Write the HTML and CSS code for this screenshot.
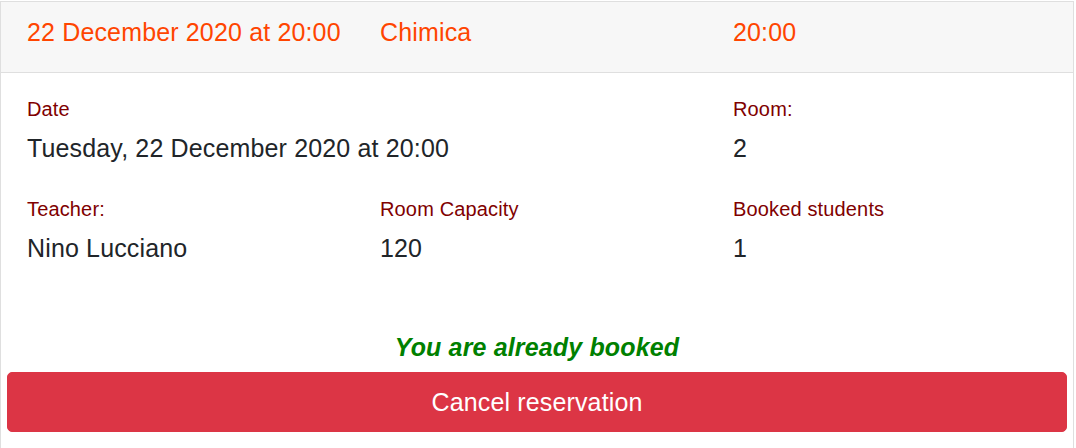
FILE: index.html
```html
<!DOCTYPE html>
<html lang="en">
<head>
<meta charset="utf-8">
<title>Lesson</title>
<link rel="stylesheet" href="styles.css">
</head>
<body>
<div class="card">
  <div class="card-header">
    <div class="grid">
      <div class="head-item">22 December 2020 at 20:00</div>
      <div class="head-item">Chimica</div>
      <div class="head-item">20:00</div>
    </div>
  </div>
  <div class="card-body">
    <div class="grid row-gap">
      <div class="field span-2">
        <div class="label">Date</div>
        <div class="value">Tuesday, 22 December 2020 at 20:00</div>
      </div>
      <div class="field">
        <div class="label">Room:</div>
        <div class="value">2</div>
      </div>
    </div>
    <div class="grid">
      <div class="field">
        <div class="label">Teacher:</div>
        <div class="value">Nino Lucciano</div>
      </div>
      <div class="field">
        <div class="label">Room Capacity</div>
        <div class="value">120</div>
      </div>
      <div class="field">
        <div class="label">Booked students</div>
        <div class="value">1</div>
      </div>
    </div>
  </div>
  <div class="actions">
    <div class="status">You are already booked</div>
    <button class="btn-cancel" type="button">Cancel reservation</button>
  </div>
</div>
</body>
</html>
```
FILE: styles.css
```css
html, body {
  margin: 0;
  padding: 0;
  background: #fff;
}
body {
  font-family: "Liberation Sans", Arial, sans-serif;
  color: #212529;
  letter-spacing: 0.15px;
}
.card {
  margin-top: 1px;
  width: 1072px;
  border: 1px solid #dfdfdf;
  border-bottom: none;
  height: 460px;
}
.card-header {
  background: #f7f7f7;
  border-bottom: 1px solid #dfdfdf;
  padding: 15px 26px 25px;
}
.grid {
  display: grid;
  grid-template-columns: 353px 353px 1fr;
}
.span-2 {
  grid-column: span 2;
}
.head-item {
  font-size: 25px;
  line-height: 30px;
  color: #ff4500;
}
.card-body {
  padding: 24px 26px 0;
}
.row-gap {
  margin-bottom: 29.5px;
}
.label {
  font-size: 20px;
  line-height: 24px;
  color: #800000;
  margin-bottom: 9px;
}
.value {
  font-size: 25px;
  line-height: 37.5px;
  color: #212529;
}
.actions {
  padding: 61.5px 6px 0;
  text-align: center;
}
.status {
  font-size: 25px;
  line-height: 37.5px;
  font-weight: bold;
  font-style: italic;
  color: #008000;
  margin-bottom: 5.5px;
}
.btn-cancel {
  display: block;
  width: 100%;
  height: 60px;
  background: #dc3545;
  border: 1px solid #dc3545;
  border-radius: 5px;
  color: #fff;
  font-family: "Liberation Sans", Arial, sans-serif;
  font-size: 25px;
  line-height: 37.5px;
  letter-spacing: 0.15px;
  padding: 11px 20px 9px;
}
```
